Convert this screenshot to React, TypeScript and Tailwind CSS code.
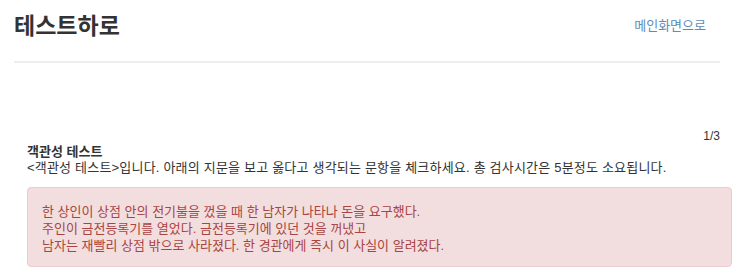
export default function App() {
  return (
    <div
      className="w-[743px] h-[276px] bg-white text-[#333] overflow-hidden"
      style={{ fontFamily: '"Liberation Sans", "Noto Sans CJK KR", sans-serif' }}
    >
      <div className="px-[14px] pr-[23px]">
        <div className="flex items-center justify-between h-[63px] border-b-2 border-[#eee]">
          <h3 className="text-[23px] font-bold text-[#333] leading-none -mt-[8px]">테스트하로</h3>
          <a className="text-[13px] text-[#5e8bb8] -mt-[10px] mr-[14px]">메인화면으로</a>
        </div>
      </div>

      <div className="ml-[27px] mr-[11px] mt-[65px]">
        <div className="text-right text-[12px] leading-[16px] pr-[12px] text-[#333]">1/3</div>
        <div className="text-[13px] leading-[16px] font-bold">객관성 테스트</div>
        <div className="text-[13px] leading-[16px] tracking-[0.2px]">
          &lt;객관성 테스트&gt;입니다. 아래의 지문을 보고 옳다고 생각되는 문항을 체크하세요. 총 검사시간은 5분정도 소요됩니다.
        </div>
        <div className="mt-[11px] h-[80px] rounded-[4px] border border-[#ebccd1] bg-[#f2dede] px-[14px] pt-[15px] text-[13px] leading-[17px] text-[#a94442]">
          <p>한 상인이 상점 안의 전기불을 껐을 때 한 남자가 나타나 돈을 요구했다.</p>
          <p>주인이 금전등록기를 열었다. 금전등록기에 있던 것을 꺼냈고</p>
          <p>남자는 재빨리 상점 밖으로 사라졌다. 한 경관에게 즉시 이 사실이 알려졌다.</p>
        </div>
      </div>
    </div>
  )
}
